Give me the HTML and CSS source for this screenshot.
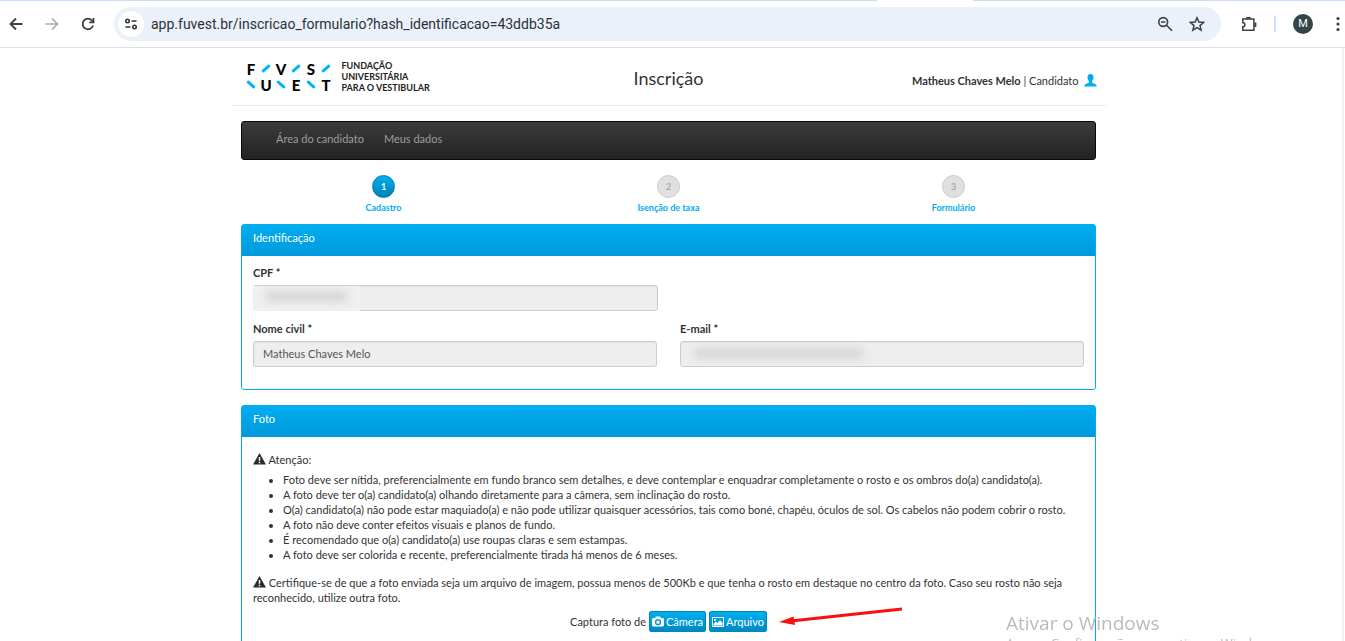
FILE: index.html
```html
<!DOCTYPE html>
<html lang="pt-BR">
<head>
<meta charset="utf-8">
<title>Inscrição</title>
<link rel="stylesheet" href="styles.css">
</head>
<body>
<div class="browser">
  <div class="tabstrip"><span class="active-tab"></span></div>
  <div class="toolbar">
    <button class="tool" aria-label="Voltar"><svg width="16" height="16" viewBox="0 0 16 16" fill="none" stroke="#3c4043" stroke-width="1.8"><path d="M14.5 8H3M8 2.500 2.500 8 8 13.500"/></svg></button>
    <button class="tool" aria-label="Avançar"><svg width="16" height="16" viewBox="0 0 16 16" fill="none" stroke="#a9acaf" stroke-width="1.600"><path d="M1.500 8H13M8 2.500 13.500 8 8 13.500"/></svg></button>
    <button class="tool" aria-label="Recarregar"><svg width="16" height="16" viewBox="0 0 16 16" fill="none" stroke="#3c4043" stroke-width="1.800"><path d="M13 9.500A5.300 5.300 0 1 1 12 4.500L13.500 6"/><path d="M13.500 2V6.300H9.200"/></svg></button>
    <div class="address">
      <button class="site-info" aria-label="Informações do site"><svg width="14" height="14" viewBox="0 0 14 14" fill="none" stroke="#30363b" stroke-width="1.600"><circle cx="3.500" cy="4" r="1.700"/><path d="M7.500 4H12.500M1.500 10H6.500"/><circle cx="10.500" cy="10" r="1.700"/></svg></button>
      <input class="url" aria-label="Endereço" value="app.fuvest.br/inscricao_formulario?hash_identificacao=43ddb35a">
      <button class="tool" aria-label="Zoom"><svg width="16" height="16" viewBox="0 0 16 16" fill="none" stroke="#3c4043" stroke-width="1.600"><circle cx="6.200" cy="6" r="4.400"/><path d="M9.500 9.300 15 14.800M4 6H8.400"/></svg></button>
      <button class="tool" aria-label="Favoritos"><svg width="16" height="16" viewBox="0 0 16 16" fill="none" stroke="#3c4043" stroke-width="1.500"><path d="M8 1.800 9.900 6.100 14.600 6.500 11 9.600 12.100 14.200 8 11.700 3.900 14.200 5 9.600 1.400 6.500 6.100 6.100Z"/></svg></button>
    </div>
    <div class="tools-end">
      <button class="tool" aria-label="Extensões"><svg width="18" height="18" viewBox="0 0 18 18" fill="none" stroke="#3c4043" stroke-width="1.700"><path d="M2 3.500H14.500V16H2V12.200C5.200 12.200 5.200 7.300 2 7.300Z"/><path d="M6.800 3V2.200H10V3M15 8.400H16.300V11.400H15" stroke-width="2"/></svg></button>
      <span class="divider"></span>
      <button class="avatar" aria-label="Perfil">M</button>
      <button class="tool" aria-label="Menu"><svg width="16" height="16" viewBox="0 0 16 16" fill="#3c4043"><circle cx="8" cy="2.500" r="1.600"/><circle cx="8" cy="8" r="1.600"/><circle cx="8" cy="13.500" r="1.600"/></svg></button>
    </div>
  </div>
</div>

<div class="viewport">
  <header class="header">
    <div class="brand">
      <div class="mark" role="img" aria-label="Fuvest">
        <span>F</span><i class="up"></i><span>V</span><i class="up"></i><span>S</span><i class="up"></i>
        <i class="down"></i><span>U</span><i class="down"></i><span>E</span><i class="down"></i><span>T</span>
      </div>
      <div class="brand-name">FUNDAÇÃO<br>UNIVERSITÁRIA<br>PARA O VESTIBULAR</div>
    </div>
    <h1 class="title">Inscrição</h1>
    <div class="user"><span><b>Matheus Chaves Melo</b> | Candidato</span>
      <svg width="13" height="13" viewBox="0 0 13 13" fill="#00aeef"><path d="M6.500 0C4.400 0 3.300 1.500 3.500 3.600 3.600 5.300 4.200 6.500 5 7.200V8.500C4.500 9.400 1.200 9.600.6 11L.3 12.500H12.700L12.400 11C11.800 9.600 8.500 9.400 8 8.500V7.200C8.800 6.500 9.400 5.300 9.500 3.600 9.700 1.500 8.600 0 6.500 0Z"/></svg>
    </div>
  </header>

  <main class="content">
    <nav class="navbar"><a href="#">Área do candidato</a><a href="#">Meus dados</a></nav>

    <div class="steps">
      <div class="step"><button class="dot current">1</button><span>Cadastro</span></div>
      <div class="step"><button class="dot" disabled>2</button><span>Isenção de taxa</span></div>
      <div class="step"><button class="dot" disabled>3</button><span>Formulário</span></div>
    </div>

    <section class="panel">
      <h2 class="panel-title">Identificação</h2>
      <div class="fields">
        <div class="field first">
          <label for="cpf">CPF *</label>
          <div class="box"><input id="cpf" readonly><span class="mask mask-cpf"><span class="smudge"></span></span></div>
        </div>
        <div class="field">
          <label for="nome">Nome civil *</label>
          <div class="box"><input id="nome" value="Matheus Chaves Melo" readonly></div>
        </div>
        <div class="field">
          <label for="email">E-mail *</label>
          <div class="box"><input id="email" readonly><span class="mask mask-email"><span class="smudge"></span></span></div>
        </div>
      </div>
    </section>

    <section class="panel">
      <h2 class="panel-title">Foto</h2>
      <div class="notes">
        <p><svg class="warn" width="13" height="12" viewBox="0 0 13 12"><path fill="#2b2b2b" d="M6.500 0 13 11.500H0Z"/><path stroke="#fff" stroke-width="1.500" d="M6.500 3.900V7.800M6.500 8.700V10.200"/></svg> Atenção:</p>
        <ul>
          <li>Foto deve ser nítida, preferencialmente em fundo branco sem detalhes, e deve contemplar e enquadrar completamente o rosto e os ombros do(a) candidato(a).</li>
          <li>A foto deve ter o(a) candidato(a) olhando diretamente para a câmera, sem inclinação do rosto.</li>
          <li>O(a) candidato(a) não pode estar maquiado(a) e não pode utilizar quaisquer acessórios, tais como boné, chapéu, óculos de sol. Os cabelos não podem cobrir o rosto.</li>
          <li>A foto não deve conter efeitos visuais e planos de fundo.</li>
          <li>É recomendado que o(a) candidato(a) use roupas claras e sem estampas.</li>
          <li>A foto deve ser colorida e recente, preferencialmente tirada há menos de 6 meses.</li>
        </ul>
        <p class="tip"><svg class="warn" width="13" height="12" viewBox="0 0 13 12"><path fill="#2b2b2b" d="M6.500 0 13 11.500H0Z"/><path stroke="#fff" stroke-width="1.500" d="M6.500 3.900V7.800M6.500 8.700V10.200"/></svg> Certifique-se de que a foto enviada seja um arquivo de imagem, possua menos de 500Kb e que tenha o rosto em destaque no centro da foto. Caso seu rosto não seja reconhecido, utilize outra foto.</p>
        <div class="capture">
          <span>Captura foto de</span>
          <button class="btn"><svg width="12" height="11" viewBox="0 0 12 11"><path fill="#fff" fill-rule="evenodd" d="M1.500 2H3.200L4 .5H8L8.800 2H10.500A1.500 1.500 0 0 1 12 3.500V9A1.500 1.500 0 0 1 10.500 10.500H1.500A1.500 1.500 0 0 1 0 9V3.500A1.500 1.500 0 0 1 1.500 2ZM6 3.100A3.100 3.100 0 1 0 6 9.300 3.100 3.100 0 0 0 6 3.100ZM6 4.500A1.700 1.700 0 1 1 6 7.900 1.700 1.700 0 0 1 6 4.500Z"/></svg>Câmera</button>
          <button class="btn"><svg width="12" height="10" viewBox="0 0 12 10"><rect x=".5" y=".5" width="11" height="9" fill="none" stroke="#fff"/><path fill="#fff" d="M1.500 8.500V7L4 4.500 5.500 6 8 3.200 10.500 6V8.500ZM2 2H4V3.700H2Z"/></svg>Arquivo</button>
          <svg class="arrow" width="124" height="20" viewBox="0 0 124 20"><path d="M123 2 12 14" stroke="#f90f0f" stroke-width="3"/><path fill="#f90f0f" d="M0 15 14.500 9.500 16 18Z"/></svg>
        </div>
      </div>
    </section>
  </main>
</div>

<aside class="watermark"><p class="wm-title">Ativar o Windows</p><p class="wm-text">Acesse Configurações para ativar o Windows.</p></aside>
</body>
</html>
```
FILE: styles.css
```css
* { box-sizing: border-box; }
body {
  margin: 0;
  height: 100vh;
  overflow: hidden;
  display: flex;
  flex-direction: column;
  background: #fff;
  color: #333;
  font: 11px/15px Lato, sans-serif;
}
button { font: inherit; border: 0; padding: 0; background: none; }
p, ul, h1, h2 { margin: 0; }

/* Browser chrome */
.browser { flex: none; border-bottom: 1px solid #dfe1e3; }
.tabstrip { height: 1px; background: #c9dffc; display: flex; padding-left: 877px; }
.active-tab { width: 96px; background: #fff; }
.toolbar { height: 46px; display: flex; align-items: center; gap: 20px; padding-left: 8px; }
.tool { display: flex; align-items: center; justify-content: center; width: 16px; height: 24px; flex: none; }
.address {
  flex: 1;
  display: flex;
  align-items: center;
  gap: 16px;
  height: 34px;
  margin-left: -2px;
  padding: 0 16px 0 4px;
  border-radius: 17px;
  background: #eaf1fa;
}
.site-info { width: 26px; height: 26px; border-radius: 50%; background: #fff; display: grid; place-items: center; }
.url {
  flex: 1;
  margin-left: -9px;
  padding: 0;
  border: 0;
  background: none;
  color: #2b3236;
  font: 14px/20px Roboto, sans-serif;
}
.tools-end { display: flex; align-items: center; gap: 17px; margin-right: -1px; }
.divider { width: 2px; height: 16px; background: #c9e0f8; }
.avatar {
  width: 20px;
  height: 20px;
  border-radius: 50%;
  background: #324548;
  color: #fff;
  font: 11px/20px Roboto, sans-serif;
}

/* Page */
.viewport {
  flex: 1;
  min-height: 0;
  overflow: hidden;
  margin-right: 1px;
  padding-right: 5px;
  border-right: 2px solid #f0f0f0;
}
.header {
  display: grid;
  grid-template-columns: 1fr auto 1fr;
  align-items: center;
  max-width: 876px;
  height: 58px;
  margin: 0 auto;
  padding: 0 10px;
  border-bottom: 1px solid #eee;
}
.brand { display: flex; align-items: center; gap: 8px; padding-left: 3px; }
.mark {
  display: grid;
  grid-template-columns: repeat(6, 15px);
  grid-auto-rows: 16px;
  place-items: center;
  color: #000;
  font: 900 15px/16px Lato, sans-serif;
}
.mark i { width: 10px; height: 3px; border-radius: 1px; background: #00b4f5; }
.up { transform: rotate(-42deg); }
.down { transform: rotate(42deg); }
.brand-name { color: #222; font: bold 9px/11px Lato, sans-serif; }
.title { padding-top: 2px; color: #333; font: 18px/24px Lato, sans-serif; }
.user { display: flex; justify-content: flex-end; align-items: center; gap: 5px; padding-top: 7px; }

.content { max-width: 855px; margin: 15px auto 0; }
.navbar {
  display: flex;
  gap: 20px;
  height: 39px;
  padding: 0 34px;
  border: 1px solid #080808;
  border-radius: 3px;
  background: linear-gradient(#3c3c3c, #222);
}
.navbar a { color: #9d9d9d; line-height: 34px; text-decoration: none; }

.steps { display: grid; grid-template-columns: repeat(3, 1fr); height: 64px; padding-top: 15px; }
.step { display: flex; flex-direction: column; align-items: center; gap: 2px; color: #00aeef; font-size: 9px; font-weight: bold; }
.dot {
  width: 23px;
  height: 23px;
  border: 1px solid #ccc;
  border-radius: 50%;
  background: #e0e0e0;
  color: #aaa;
  line-height: 21px;
}
.current { border-color: #0081b5; background: linear-gradient(#00aeef, #0080b8); color: #fff; }

.panel { margin-bottom: 15px; border: 1px solid #00aeef; border-radius: 3px; }
.panel-title {
  height: 31px;
  padding: 0 11px;
  background: linear-gradient(#00aeef, #0099dc);
  color: #fff;
  font: 11px/26px Lato, sans-serif;
}
.fields { display: grid; grid-template-columns: 1fr 1fr; gap: 10px 23px; padding: 9px 11px 22px; }
.first { grid-column: 1 / -1; width: calc(50% - 11px); }
.field label { display: block; margin-bottom: 5px; font-weight: bold; }
.box { position: relative; }
.box input {
  display: block;
  width: 100%;
  height: 26px;
  padding: 0 9px 2px;
  border: 1px solid #ccc;
  border-radius: 3px;
  background: #eee;
  box-shadow: inset 0 1px 1px #e0e0e0;
  color: #555;
  font: inherit;
}
.mask { position: absolute; overflow: hidden; background: #eee; }
.mask-cpf { top: 1px; left: 0; width: 107px; height: 25px; padding: 5px 12px; background: #f0f0f0; }
.mask-email { top: 2px; left: 4px; width: 190px; height: 22px; padding: 5px 10px; }
.smudge { display: block; height: 11px; border-radius: 5px; background: #d6d6d6; filter: blur(4px); }

.notes { padding: 15px 11px; }
.notes ul { margin: 5px 0 13px; padding-left: 30px; }
.warn { vertical-align: -1px; }
.capture { display: flex; justify-content: center; align-items: center; gap: 3px; margin-top: 6px; position: relative; }
.btn {
  display: flex;
  align-items: center;
  gap: 2px;
  height: 21px;
  padding: 0 2px;
  border: 1px solid #0087bf;
  border-radius: 2px;
  background: linear-gradient(#00aeef, #0088c4);
  color: #fff;
}
.arrow { position: absolute; left: calc(50% + 110px); top: -4px; }

.watermark {
  position: fixed;
  left: calc(100% - 339px);
  top: calc(100% - 31px);
  white-space: nowrap;
  color: #bbb;
  font-family: "Open Sans", sans-serif;
}
.wm-title { font-size: 19px; line-height: 26px; }
.wm-text { font-size: 13px; line-height: 15px; }
```
